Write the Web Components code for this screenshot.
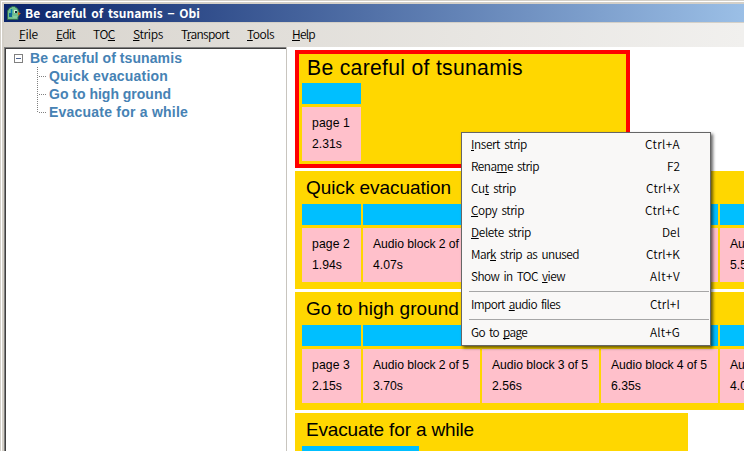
<!DOCTYPE html>
<html lang="en"><head><meta charset="utf-8"><title>Be careful of tsunamis - Obi</title>
<style>html,body{margin:0;width:744px;height:451px;overflow:hidden;background:#d4d0c8}</style></head>
<body><obi-window></obi-window>
<script>
// Text run whose letter spacing is adjusted to fill the width given in "w".
class FitText extends HTMLElement{
  connectedCallback(){
    if(!this.shadowRoot){
      this.attachShadow({mode:'open'}).innerHTML='<style>:host{display:inline-block;white-space:pre}::slotted(u){text-decoration-thickness:1px;text-underline-offset:1px;text-decoration-skip-ink:none}</style><slot></slot>';
    }
    const w=+this.getAttribute('w');
    const natural=this.getBoundingClientRect().width;
    const n=this.textContent.length;
    this.style.letterSpacing=((w-natural)/n)+'px';
    this.style.width=w+'px';
  }
}
class TitleBar extends HTMLElement{
  connectedCallback(){
    this.attachShadow({mode:'open'}).innerHTML=`<style>
    :host{display:flex;height:18px;background:linear-gradient(90deg,#0a246a,#9bbfe6);align-items:center;color:#fff;font:bold 12px/18px "Noto Sans CJK JP","Liberation Sans",sans-serif;word-spacing:2px;padding-left:2px}
    svg{width:16px;height:16px;margin-right:3px;flex:none}</style>
    <svg viewBox="0 0 16 16"><path d="M1.500 14.500V6l2-3 3-1.500h2l3 2 1.500 3v4l-1 2v2z" fill="#72c08e" stroke="#2f6b50"/><path d="M5.500 4v6" stroke="#087eb0" stroke-width="1.500"/><path d="M3 8h3v4H3z" fill="#12679a"/><path d="M8 5h3v3H8z" fill="#d5eedc"/><path d="M9 6h2v2H9z" fill="#142d3c"/><path d="M12 7l3 1.500-3 2z" fill="#d66b20"/><path d="M7 12h4" stroke="#9bd9ae"/></svg><slot></slot>`;
  }
}
class MenuBar extends HTMLElement{
  connectedCallback(){
    this.attachShadow({mode:'open'}).innerHTML=`<style>
    :host{display:flex;gap:18px;height:24px;border-top:1px solid #d4d0c8;padding-left:15px;background:linear-gradient(90deg,#d8d4cd,#f1f0ee);font:350 12px/22px "Noto Sans CJK JP","Liberation Sans",sans-serif;color:#000}</style><slot></slot>`;
  }
}
class TreeView extends HTMLElement{
  connectedCallback(){
    this.attachShadow({mode:'open'}).innerHTML=`<style>
    :host{display:block;box-sizing:border-box;width:282px;border-left:1px solid #808080;border-top:1px solid #808080;background:#fff}
    .in{box-sizing:border-box;height:100%;border-left:1px solid #404040;border-top:1px solid #404040;font:bold 14px/18px "Liberation Sans",Arial,sans-serif;color:#4682b4}
    .root{display:flex;height:18px;align-items:center;padding-left:8px}
    .root svg{width:9px;height:9px;margin-right:7px;flex:none}
    .kids{display:flex}.kids svg{width:10px;height:46px;margin-left:31px;margin-right:2px;flex:none}
    .col{display:flex;flex-direction:column;align-items:flex-start}.col>*{height:18px}</style>
    <div class="in"><div class="root"><svg viewBox="0 0 9 9" shape-rendering="crispEdges"><path d="M.5.5h8v8h-8z" fill="#fff" stroke="#808080"/><path d="M2 4.500h5" stroke="#4b6390"/></svg><fit-text w="152">Be careful of tsunamis</fit-text></div>
    <div class="kids"><svg viewBox="0 0 10 46" shape-rendering="crispEdges" stroke="#808080" stroke-dasharray="1 1"><path d="M.5 0v46M2 9.500h8M2 27.500h8M2 45.500h8"/></svg>
    <div class="col"><fit-text w="119">Quick evacuation</fit-text><fit-text w="122">Go to high ground</fit-text><fit-text w="139">Evacuate for a while</fit-text></div></div></div>`;
  }
}
class AudioBlock extends HTMLElement{
  connectedCallback(){
    const l=this.getAttribute('label')||'',t=this.getAttribute('time')||'',page=l.startsWith('page');
    this.attachShadow({mode:'open'}).innerHTML=`<style>
    :host{display:block;flex:none;width:${page?59:117}px;color:#000;font:12.2px/21px "Liberation Sans",Arial,sans-serif}
    .wave{height:21px;background:#00bfff;margin-bottom:3px}
    .info{box-sizing:border-box;height:54px;background:#ffc0cb;padding:6px 0 0 10px;white-space:nowrap;overflow:hidden}
    </style><div class="wave"></div><div class="info">${l?`<fit-text w="${page?38:96}">${l}</fit-text><div><fit-text w="30">${t}</fit-text></div>`:''}</div>`;
  }
}
class ObiStrip extends HTMLElement{
  connectedCallback(){
    this.attachShadow({mode:'open'}).innerHTML=`<style>
    :host{display:block;box-sizing:border-box;flex:none;height:118px;background:#ffd700;padding:0 0 0 7px;width:700px}
    :host([selected]){border:4px solid #f00;padding-left:3px;width:335px}
    :host([selected]) header{margin-top:-4px;padding-left:5px;font-size:21.200px;line-height:36px}
    header{height:33px;box-sizing:border-box;padding-left:4px;font:19px/34px "Liberation Sans",Arial,sans-serif;color:#000}
    .blocks{display:flex;gap:2px}</style><header><fit-text w="${this.getAttribute('tw')}">${this.getAttribute('name')}</fit-text></header><div class="blocks"><slot></slot></div>`;
  }
}
class StripsView extends HTMLElement{
  connectedCallback(){
    this.attachShadow({mode:'open'}).innerHTML='<style>:host{display:flex;flex-direction:column;gap:3px;flex:1;min-width:0;overflow:hidden;background:#fff;box-shadow:-1px 0 #c8c5bf;margin-left:1px;padding:3px 0 0 8px}</style><slot></slot>';
  }
}
class ContextMenu extends HTMLElement{
  connectedCallback(){
    this.attachShadow({mode:'open'}).innerHTML=`<style>
    :host{position:absolute;left:461px;top:132px;box-sizing:border-box;width:250px;height:214px;border:1px solid #666;background:#f9f8f7;box-shadow:2px 2px 3px rgba(0,0,0,.6);color:#000;font:350 11.8px/21px "Noto Sans CJK JP","Liberation Sans",sans-serif;word-spacing:2px}
    .row{display:flex;justify-content:space-between;height:22px;padding:0 30px 0 9px}
    hr{height:1px;border:0;background:#a6a6a6;margin:4px 1px 1px 7px}</style>
    ${[['<u>I</u>nsert strip',56,'Ctrl+A',35],['Rena<u>m</u>e strip',68,'F2',13],['Cu<u>t</u> strip',45,'Ctrl+X',34],['<u>C</u>opy strip',53,'Ctrl+C',35],['<u>D</u>elete strip',60,'Del',18],['Mar<u>k</u> strip as unused',108,'Ctrl+K',34],['Show in TOC <u>v</u>iew',94,'Alt+V',30],0,['Import <u>a</u>udio files',89,'Ctrl+I',30],0,['Go to <u>p</u>age',56,'Alt+G',30]].map(r=>r?`<div class="row"><fit-text w="${r[1]}">${r[0]}</fit-text><fit-text w="${r[3]}">${r[2]}</fit-text></div>`:'<hr>').join('')}`;
  }
}
class ObiWindow extends HTMLElement{
  connectedCallback(){
    const blocks=(p,ts)=>ts.map((t,i)=>`<audio-block label="${!t?'':i?`Audio block ${i+1} of 5`:'page '+p}" time="${t}"></audio-block>`).join('');
    this.attachShadow({mode:'open'}).innerHTML=`<style>
    :host{display:flex;flex-direction:column;box-sizing:border-box;position:relative;width:744px;height:451px;overflow:hidden;background:#d4d0c8;padding:4px 0 0 4px;box-shadow:inset 1px 1px #d4d0c8,inset 2px 2px #fff}
    main{display:flex;flex:1;min-height:0}.last{width:393px}</style>
    <title-bar><fit-text w="175">Be careful of tsunamis − Obi</fit-text></title-bar>
    <menu-bar><fit-text w="19"><u>F</u>ile</fit-text><fit-text w="19"><u>E</u>dit</fit-text><fit-text w="22">TO<u>C</u></fit-text><fit-text w="30"><u>S</u>trips</fit-text><fit-text w="48">T<u>r</u>ansport</fit-text><fit-text w="27"><u>T</u>ools</fit-text><fit-text w="23"><u>H</u>elp</fit-text></menu-bar>
    <main><tree-view></tree-view><strips-view>
    <obi-strip selected name="Be careful of tsunamis" tw="216">${blocks(1,['2.31s'])}</obi-strip>
    <obi-strip name="Quick evacuation" tw="145">${blocks(2,['1.94s','4.07s','','','5.58s'])}</obi-strip>
    <obi-strip name="Go to high ground" tw="153">${blocks(3,['2.15s','3.70s','2.56s','6.35s','4.03s'])}</obi-strip>
    <obi-strip class="last" name="Evacuate for a while" tw="168"><audio-block></audio-block></obi-strip>
    </strips-view></main><context-menu></context-menu>`;
  }
}
customElements.define('fit-text',FitText);
customElements.define('title-bar',TitleBar);
customElements.define('menu-bar',MenuBar);
customElements.define('tree-view',TreeView);
customElements.define('audio-block',AudioBlock);
customElements.define('obi-strip',ObiStrip);
customElements.define('strips-view',StripsView);
customElements.define('context-menu',ContextMenu);
customElements.define('obi-window',ObiWindow);
</script></body></html>
